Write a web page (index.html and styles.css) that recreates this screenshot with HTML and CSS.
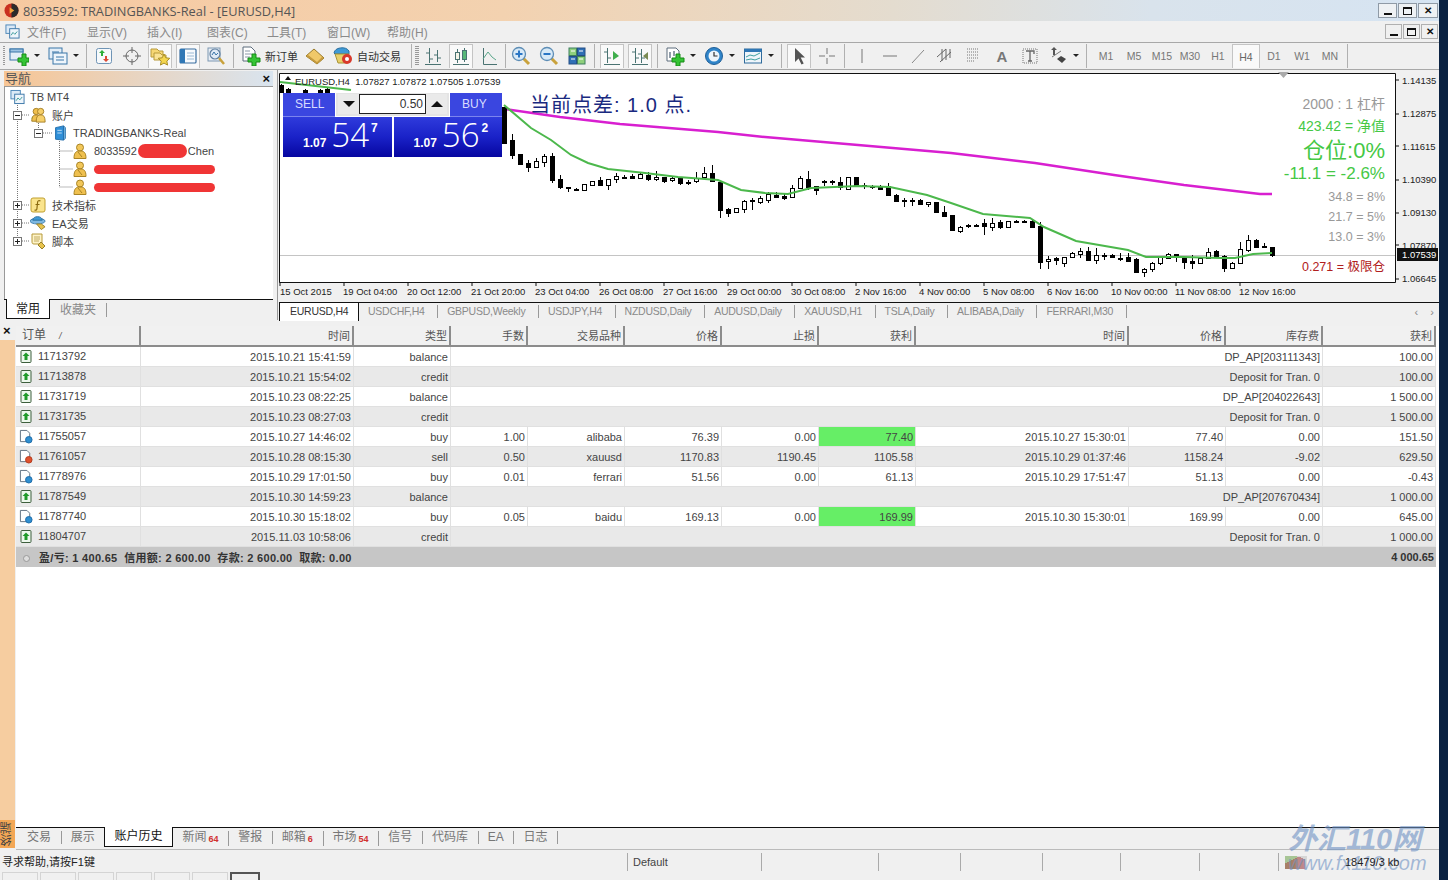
FILE: index.html

```html
<!DOCTYPE html>
<html lang="zh-CN">
<head>
    <meta charset="UTF-8">
    <title>8033592: TRADINGBANKS-Real - [EURUSD,H4]</title>
    <link rel="stylesheet" href="styles.css">
</head>
<body>
    <!-- Icon sprite -->
    <svg class="sprite" xmlns="http://www.w3.org/2000/svg">
        <symbol id="i-app" viewBox="0 0 16 16"><rect x="1" y="1" width="10" height="9" fill="#dbe9f6" stroke="#4a86b8"/><rect x="5" y="5" width="10" height="10" fill="#eef5fb" stroke="#3a76a8"/><path d="M6.500 12l2-3 2 2 2.500-3" fill="none" stroke="#3a9a9a"/></symbol>
        <symbol id="i-newchart" viewBox="0 0 20 20"><rect x="1" y="3" width="13" height="11" fill="#e3eef8" stroke="#3a76a8"/><rect x="1" y="3" width="13" height="3" fill="#9cc3e3" stroke="#3a76a8"/><path d="M13 8v4H9v4h4v4h4v-4h3v-4h-3V8z" fill="#35c435" stroke="#178a17"/></symbol>
        <symbol id="i-profiles" viewBox="0 0 20 20"><rect x="1" y="2" width="13" height="11" fill="#e3eef8" stroke="#3a76a8"/><rect x="5" y="7" width="14" height="11" fill="#eef5fb" stroke="#3a76a8"/><path d="M4 6h7M8 11h8M8 14h8" stroke="#3a76a8"/></symbol>
        <symbol id="i-watch" viewBox="0 0 20 20"><rect x="2.500" y="2.500" width="15" height="15" rx="2" fill="#f6f9fc" stroke="#6f94b5"/><path d="M8 4l3 3H9v3H7V7H5z" fill="#2eae3c"/><path d="M12 16l-3-3h2v-3h2v3h2z" fill="#dc4a35"/></symbol>
        <symbol id="i-cross" viewBox="0 0 20 20"><circle cx="10" cy="10" r="6" fill="none" stroke="#666"/><path d="M10 1v6M10 13v6M1 10h6M13 10h6" stroke="#666"/></symbol>
        <symbol id="i-fav" viewBox="0 0 20 20"><path d="M1 3h6l2 2h4v6H1z" fill="#f6d774" stroke="#b79a3a"/><path d="M4 7h6l2 2h4v5H4z" fill="#fae394" stroke="#b79a3a"/><path d="M14 8l1.800 3.800 4 .5-3 2.800.8 4-3.600-2-3.600 2 .8-4-3-2.800 4-.5z" fill="#f4d64e" stroke="#a98f28"/></symbol>
        <symbol id="i-navp" viewBox="0 0 20 20"><rect x="2" y="3" width="16" height="14" rx="1" fill="#f7fafd" stroke="#3a6ea0" stroke-width="1.200"/><rect x="2" y="3" width="5" height="14" fill="#2f77b5"/><path d="M9 7h7M9 10h7M9 13h7" stroke="#9ab9d4"/></symbol>
        <symbol id="i-tester" viewBox="0 0 20 20"><rect x="2" y="2" width="12" height="13" fill="#e8eef5" stroke="#7c97b2"/><circle cx="9" cy="8" r="5" fill="#dfeaf5" stroke="#5f7f9f" stroke-width="1.200"/><path d="M6 9l2-3 2 3 2-2" fill="none" stroke="#3a76a8"/><path d="M13 12l5 6" stroke="#c9a23c" stroke-width="2.500"/></symbol>
        <symbol id="i-order" viewBox="0 0 20 20"><path d="M2 1h8l4 4v10H2z" fill="#fff" stroke="#5d6d7d"/><path d="M4 5h5M4 8h7M4 11h5" stroke="#8a98a6"/><path d="M11 8v4H7v4h4v4h4v-4h4v-4h-4V8z" fill="#35c435" stroke="#178a17"/></symbol>
        <symbol id="i-diamond" viewBox="0 0 20 20"><path d="M1 10l8-7 10 9-7 6z" fill="#f0c869" stroke="#9a7b2a"/><path d="M1 10l11 8 7-6-2-1-5 5-9-7z" fill="#c49a3f"/></symbol>
        <symbol id="i-auto" viewBox="0 0 20 20"><path d="M1 7a8 6 0 0 1 15-2v3H2z" fill="#3f9ad6" stroke="#2a6f9f"/><path d="M2 8h14l-2 9H5z" fill="#e8d06a" stroke="#a89335"/><circle cx="14" cy="13" r="5" fill="#d8392b"/><circle cx="14" cy="13" r="2" fill="#fff"/></symbol>
        <symbol id="i-bars" viewBox="0 0 20 20"><path d="M6.500 2v15M3 7h3.500M6.500 13H10M14.500 4v12M11 9h3.500M14.500 12H18M2 18.500h16" fill="none" stroke="#4a7372"/></symbol>
        <symbol id="i-candle" viewBox="0 0 20 20"><path d="M6.500 3v14M13.500 2v14M2 18.500h16" stroke="#4a7372"/><rect x="4.500" y="6.500" width="4" height="7" fill="#f4f4e8" stroke="#4a7372"/><rect x="11.500" y="4.500" width="4" height="9" fill="#57b878" stroke="#4a7372"/></symbol>
        <symbol id="i-line" viewBox="0 0 20 20"><path d="M4.500 2v16.500H18" fill="none" stroke="#4a7372"/><path d="M4 13l5-7 4 5 4 3" fill="none" stroke="#5aa68a"/></symbol>
        <symbol id="i-zoomin" viewBox="0 0 20 20"><path d="M12 12l6 6" stroke="#c9a23c" stroke-width="3"/><circle cx="8" cy="8" r="6.500" fill="#d7e9f7" stroke="#5d8db5" stroke-width="1.300"/><path d="M4.500 8h7M8 4.500v7" stroke="#2a76c5" stroke-width="2"/></symbol>
        <symbol id="i-zoomout" viewBox="0 0 20 20"><path d="M12 12l6 6" stroke="#c9a23c" stroke-width="3"/><circle cx="8" cy="8" r="6.500" fill="#d7e9f7" stroke="#5d8db5" stroke-width="1.300"/><path d="M4.500 8h7" stroke="#2a76c5" stroke-width="2"/></symbol>
        <symbol id="i-tile" viewBox="0 0 20 20"><rect x="2" y="2" width="7.500" height="7.500" fill="#8fd07c" stroke="#3d7f5f"/><rect x="10.500" y="2" width="7.500" height="7.500" fill="#2f6fb5" stroke="#254f85"/><rect x="2" y="10.500" width="7.500" height="7.500" fill="#2f6fb5" stroke="#254f85"/><rect x="10.500" y="10.500" width="7.500" height="7.500" fill="#8fd07c" stroke="#3d7f5f"/><path d="M4 5h4M12 5h4M4 13h4M12 13h4" stroke="#fff"/></symbol>
        <symbol id="i-shift" viewBox="0 0 20 20"><path d="M5.500 2v15M2 6h3.500M5.500 12H9M2 18.500h16" fill="none" stroke="#4a7372"/><path d="M11 5l6 5-6 4z" fill="#3fae4c"/></symbol>
        <symbol id="i-scroll" viewBox="0 0 20 20"><path d="M5.500 2v15M2 6h3.500M5.500 12H9M11.500 3v14M8 8h3.500M11.500 12H15M2 18.500h16" fill="none" stroke="#4a7372"/><path d="M18 6l-5 4 5 4z" fill="#7a8a52"/></symbol>
        <symbol id="i-indic" viewBox="0 0 20 20"><path d="M2 2h9l3 3v10H2z" fill="#fff" stroke="#5d6d7d"/><path d="M5 6v6M9 5v5" stroke="#6d7d8d" stroke-width="1.500"/><path d="M11 8v4H7v4h4v4h4v-4h4v-4h-4V8z" fill="#35c435" stroke="#178a17"/></symbol>
        <symbol id="i-clock" viewBox="0 0 20 20"><circle cx="10" cy="10" r="8.500" fill="#2f84c9" stroke="#1f5f98"/><circle cx="10" cy="10" r="5.500" fill="#eef5fb"/><path d="M10 6v4h3.500" fill="none" stroke="#333" stroke-width="1.200"/></symbol>
        <symbol id="i-tpl" viewBox="0 0 20 20"><rect x="1.500" y="3" width="17" height="14" fill="#eef5fb" stroke="#2f6b9b"/><rect x="1.500" y="3" width="17" height="3" fill="#2f77b5"/><path d="M3 11l4-2 4 1 6-3M3 14l5-1 4 1 5-2" fill="none" stroke="#3fa0a0"/></symbol>
        <symbol id="i-cursor" viewBox="0 0 20 20"><path d="M6 2v14l3.500-3.500 3 6 2.200-1-3-6H16z" fill="#555"/></symbol>
        <symbol id="i-plus" viewBox="0 0 20 20"><path d="M10 2v6M10 12v6M2 10h6M12 10h6" stroke="#777"/></symbol>
        <symbol id="i-vline" viewBox="0 0 20 20"><path d="M10 3v14" stroke="#777"/></symbol>
        <symbol id="i-hline" viewBox="0 0 20 20"><path d="M3 10h14" stroke="#777"/></symbol>
        <symbol id="i-trend" viewBox="0 0 20 20"><path d="M4 17L16 4" stroke="#888"/></symbol>
        <symbol id="i-channel" viewBox="0 0 20 20"><path d="M1 11l9-8M4 16l11-10M6 3v12M10 3v11M14 3v9" fill="none" stroke="#666"/></symbol>
        <symbol id="i-fibo" viewBox="0 0 20 20"><path d="M3 3h11M3 6h11M3 9h11M3 12h11M3 15h8" stroke="#777" stroke-dasharray="1 1"/></symbol>
        <symbol id="i-t" viewBox="0 0 20 20"><rect x="3" y="3" width="14" height="14" fill="none" stroke="#777" stroke-dasharray="1 1"/><path d="M6 5h8v3M10 5v10M8 15h4" fill="none" stroke="#666" stroke-width="1.300"/></symbol>
        <symbol id="i-arrows" viewBox="0 0 20 20"><path d="M3 4l3-3 3 3H7v5H5V4z" fill="#555"/><path d="M4 11l9-6" stroke="#777"/><path d="M9 13l4-3 5 3-4 4z" fill="#444"/></symbol>
        <symbol id="i-group" viewBox="0 0 18 18"><circle cx="5" cy="13" r="3" fill="#3fc43f"/><circle cx="7" cy="5" r="3.500" fill="#f0bf4c" stroke="#a07a22"/><path d="M2 16c0-6 2-7 5-7s5 1 5 7z" fill="#efc04f" stroke="#a07a22"/><circle cx="12" cy="5" r="3.500" fill="#f6cf68" stroke="#a07a22"/><path d="M7 17c0-7 2-8 5-8s5 1 5 8z" fill="#f6cf68" stroke="#a07a22"/></symbol>
        <symbol id="i-server" viewBox="0 0 14 18"><path d="M2 3l9-2v16l-9-1z" fill="#2f8fd8" stroke="#1d6aa8"/><path d="M11 1l2 2v12l-2 2z" fill="#7fc0ea" stroke="#1d6aa8"/><path d="M4 6h5M4 9h5" stroke="#cfe6f7"/></symbol>
        <symbol id="i-user" viewBox="0 0 14 16"><circle cx="7" cy="4.500" r="3.500" fill="#f2c75a" stroke="#a98425"/><path d="M1 15.500c0-6 2-7.500 6-7.500s6 1.500 6 7.500z" fill="#efc04f" stroke="#a98425"/><path d="M5 9l4 5" stroke="#a98425"/></symbol>
        <symbol id="i-func" viewBox="0 0 16 16"><rect x="1" y="1" width="14" height="14" rx="2" fill="#fae48d" stroke="#c0a030"/><path d="M10.500 4c-2-1-3 0-3 2l-.5 5c0 2-1 2.500-2.500 2M5.500 7.500h4" fill="none" stroke="#8a6a10" stroke-width="1.200"/></symbol>
        <symbol id="i-ea" viewBox="0 0 17 16"><ellipse cx="8" cy="6" rx="8" ry="3" fill="#7fb8e0" stroke="#3d7fb0"/><path d="M3 5c0-5 10-5 10 0z" fill="#3f9ad6" stroke="#2a6f9f"/><path d="M7 9l5 6 4-3-4-3z" fill="#e8c34d" stroke="#98812c"/></symbol>
        <symbol id="i-script" viewBox="0 0 16 16"><path d="M2 1h10v10H4c-2 0-2-1-2-3z" fill="#fdf3c8" stroke="#b79a3a"/><path d="M4 4h6M4 6h6M4 8h5" stroke="#c2ab62"/><path d="M8 12l3-3 4 4-3 3z" fill="#e8c34d" stroke="#98812c"/></symbol>
        <symbol id="i-deposit" viewBox="0 0 13 15"><rect x="1.500" y="1.500" width="10" height="12" rx="1" fill="#eef8ee" stroke="#3d5f3d"/><path d="M6.500 3.500l3.500 3.500H8v4H5V7H3z" fill="#1f9a2a"/></symbol>
        <symbol id="i-docbuy" viewBox="0 0 15 15"><path d="M1.500 1h7l3 3v9h-10z" fill="#fff" stroke="#5d6d7d"/><circle cx="10.500" cy="11" r="3.500" fill="#2f8fd0" stroke="#1d6aa8"/></symbol>
        <symbol id="i-docsell" viewBox="0 0 15 15"><path d="M1.500 1h7l3 3v9h-10z" fill="#fff" stroke="#5d6d7d"/><circle cx="10.500" cy="11" r="3.500" fill="#e0502c" stroke="#b23a1c"/></symbol>
    </svg>

    <div class="app">
        <!-- Title bar -->
        <div class="titlebar">
            <svg class="title-logo" viewBox="0 0 16 16"><circle cx="8" cy="8" r="7.500" fill="#c9301f"/><path d="M8 .5a7.500 7.500 0 0 1 0 15z" fill="#2b2b2b"/><path d="M6 4.500l5 3.500-5 3.500z" fill="#f3a23a"/></svg>
            <span class="title-text">8033592: TRADINGBANKS-Real - [EURUSD,H4]</span>
            <div class="win-btns">
                <span class="win-btn"><i class="glyph-min"></i></span>
                <span class="win-btn"><i class="glyph-max"></i></span>
                <span class="win-btn close">✕</span>
            </div>
        </div>

        <!-- Menu bar -->
        <div class="menubar">
            <svg class="menu-icon"><use href="#i-app"/></svg>
            <span class="menu-item">文件(F)</span>
            <span class="menu-item">显示(V)</span>
            <span class="menu-item">插入(I)</span>
            <span class="menu-item">图表(C)</span>
            <span class="menu-item">工具(T)</span>
            <span class="menu-item">窗口(W)</span>
            <span class="menu-item">帮助(H)</span>
            <div class="win-btns small">
                <span class="win-btn"><i class="glyph-min"></i></span>
                <span class="win-btn"><i class="glyph-max"></i></span>
                <span class="win-btn close">✕</span>
            </div>
        </div>

        <!-- Toolbar -->
        <div class="toolbar">
            <span class="grip"></span>
            <span class="tool"><svg><use href="#i-newchart"/></svg></span><span class="caret"></span>
            <span class="tool"><svg><use href="#i-profiles"/></svg></span><span class="caret"></span>
            <span class="sep"></span>
            <span class="tool"><svg><use href="#i-watch"/></svg></span>
            <span class="tool"><svg><use href="#i-cross"/></svg></span>
            <span class="tool on"><svg><use href="#i-fav"/></svg></span>
            <span class="tool on"><svg><use href="#i-navp"/></svg></span>
            <span class="tool"><svg><use href="#i-tester"/></svg></span>
            <span class="sep"></span>
            <span class="tool"><svg><use href="#i-order"/></svg></span>
            <span class="tool-label order">新订单</span>
            <span class="tool"><svg><use href="#i-diamond"/></svg></span>
            <span class="tool"><svg><use href="#i-auto"/></svg></span>
            <span class="tool-label auto">自动交易</span>
            <span class="sep"></span>
            <span class="grip wide"></span>
            <span class="tool"><svg><use href="#i-bars"/></svg></span>
            <span class="tool on"><svg><use href="#i-candle"/></svg></span>
            <span class="tool"><svg><use href="#i-line"/></svg></span>
            <span class="sep tight"></span>
            <span class="tool"><svg><use href="#i-zoomin"/></svg></span>
            <span class="tool"><svg><use href="#i-zoomout"/></svg></span>
            <span class="tool"><svg><use href="#i-tile"/></svg></span>
            <span class="sep"></span>
            <span class="tool on"><svg><use href="#i-shift"/></svg></span>
            <span class="tool on"><svg><use href="#i-scroll"/></svg></span>
            <span class="sep"></span>
            <span class="tool"><svg><use href="#i-indic"/></svg></span><span class="caret"></span>
            <span class="tool"><svg><use href="#i-clock"/></svg></span><span class="caret"></span>
            <span class="tool"><svg><use href="#i-tpl"/></svg></span><span class="caret"></span>
            <span class="sep"></span>
            <span class="tool on"><svg><use href="#i-cursor"/></svg></span>
            <span class="tool"><svg><use href="#i-plus"/></svg></span>
            <span class="sep"></span>
            <span class="tool"><svg><use href="#i-vline"/></svg></span>
            <span class="tool"><svg><use href="#i-hline"/></svg></span>
            <span class="tool"><svg><use href="#i-trend"/></svg></span>
            <span class="tool"><svg><use href="#i-channel"/></svg></span>
            <span class="tool"><svg><use href="#i-fibo"/></svg></span>
            <span class="tool letter">A</span>
            <span class="tool"><svg><use href="#i-t"/></svg></span>
            <span class="tool"><svg><use href="#i-arrows"/></svg></span><span class="caret"></span>
            <span class="sep"></span>
            <span class="tf first">M1</span>
            <span class="tf">M5</span>
            <span class="tf">M15</span>
            <span class="tf">M30</span>
            <span class="tf">H1</span>
            <span class="tf on">H4</span>
            <span class="tf">D1</span>
            <span class="tf">W1</span>
            <span class="tf">MN</span>
            <span class="sep"></span>
        </div>

        <div class="workspace">
            <!-- Navigator -->
            <div class="navigator">
                <div class="nav-head"><span>导航</span><b>×</b></div>
                <div class="tree">
                    <svg class="tree-lines" viewBox="0 0 268 210">
                        <path d="M12.500 16v138M33.500 36v10M54.500 54v46M17 28h8M38 46h9M54.500 64h13M54.500 82h13M54.500 100h13M17 118h8M17 136h8M17 154h8" fill="none" stroke="#777" stroke-dasharray="1 1"/>
                    </svg>
                    <div class="node root"><svg class="ico"><use href="#i-app"/></svg>TB MT4</div>
                    <div class="node lv1"><span class="expander minus"></span><svg class="ico"><use href="#i-group"/></svg>账户</div>
                    <div class="node lv2"><span class="expander minus"></span><svg class="ico"><use href="#i-server"/></svg>TRADINGBANKS-Real</div>
                    <div class="node lv3"><svg class="ico"><use href="#i-user"/></svg>8033592<span class="blot first"></span>Chen</div>
                    <div class="node lv3"><svg class="ico"><use href="#i-user"/></svg><span class="blot"></span></div>
                    <div class="node lv3"><svg class="ico"><use href="#i-user"/></svg><span class="blot"></span></div>
                    <div class="node lv1"><span class="expander"></span><svg class="ico"><use href="#i-func"/></svg>技术指标</div>
                    <div class="node lv1"><span class="expander"></span><svg class="ico"><use href="#i-ea"/></svg>EA交易</div>
                    <div class="node lv1"><span class="expander"></span><svg class="ico"><use href="#i-script"/></svg>脚本</div>
                </div>
                <div class="nav-tabs">
                    <span class="nav-tab active">常用</span>
                    <span class="nav-tab">收藏夹</span>
                </div>
            </div>

            <!-- Chart window -->
            <div class="chart-pane">
                <div class="chart-wrap">
                    <svg class="chart" viewBox="278 72 1161 230">
                        <rect x="280" y="74" width="1115" height="208" fill="#fff"/>
                        <path d="M279.500 73.500H1395.500V282.500H279.500Z" fill="none" stroke="#111"/>
                        <path d="M280 255.500H1395" stroke="#c4c4c4"/>
                        <path d="M1278 72h11l-5.500 6z" fill="#aaa"/>
                        <polyline class="ma-slow" points="505,109 560,117 620,124 718,132 765,137 858,145 951,153 1035,163 1114,175 1184,185 1260,194 1272,194"/>
                        <g id="candles"></g>
                        <polyline class="ma-fast" points="280,82 351,90"/>
                        <polyline class="ma-fast" points="504,105 531,128 551,140 571,155 588,163 608,169 645,173 678,177 718,180 741,190 765,193 788,194 811,188 858,186 890,187 927,195 951,203 983,214 1030,218 1044,227 1076,241 1128,250 1146,257 1184,257 1221,258 1235,258 1253,254 1272,253"/>
                        <path d="M285 80l3-4 3 4z" fill="#111"/>
                        <text class="lbl" x="295" y="85">EURUSD,H4  1.07827 1.07872 1.07505 1.07539</text>
                        <text class="spread" x="530" y="112">当前点差: 1.0 点.</text>
                        <text class="info grey big" x="1385" y="109">2000 : 1 杠杆</text>
                        <text class="info green big" x="1385" y="131">423.42 = 净值</text>
                        <text class="info green huge" x="1385" y="158">仓位:0%</text>
                        <text class="info green large" x="1385" y="179">-11.1 = -2.6%</text>
                        <text class="info grey" x="1385" y="201">34.8 = 8%</text>
                        <text class="info grey" x="1385" y="221">21.7 = 5%</text>
                        <text class="info grey" x="1385" y="241">13.0 = 3%</text>
                        <text class="info red" x="1385" y="271">0.271 = 极限仓</text>
                        <!-- Price axis -->
                        <path d="M1395 80h4M1395 114h4M1395 146h4M1395 180h4M1395 213h4M1395 245h4M1395 279h4" stroke="#111"/>
                        <text class="lbl" x="1402" y="84">1.14135</text>
                        <text class="lbl" x="1402" y="117">1.12875</text>
                        <text class="lbl" x="1402" y="150">1.11615</text>
                        <text class="lbl" x="1402" y="183">1.10390</text>
                        <text class="lbl" x="1402" y="216">1.09130</text>
                        <text class="lbl" x="1402" y="249">1.07870</text>
                        <text class="lbl" x="1402" y="282">1.06645</text>
                        <rect x="1397" y="248" width="41" height="13" fill="#111"/>
                        <text class="lbl tag" x="1402" y="258">1.07539</text>
                        <!-- Time axis -->
                        <path d="M280 282v4M344 282v4M408 282v4M472 282v4M536 282v4M600 282v4M664 282v4M728 282v4M792 282v4M856 282v4M920 282v4M984 282v4M1048 282v4M1112 282v4M1176 282v4M1240 282v4" stroke="#111"/>
                        <text class="lbl" x="280" y="295">15 Oct 2015</text>
                        <text class="lbl" x="343" y="295">19 Oct 04:00</text>
                        <text class="lbl" x="407" y="295">20 Oct 12:00</text>
                        <text class="lbl" x="471" y="295">21 Oct 20:00</text>
                        <text class="lbl" x="535" y="295">23 Oct 04:00</text>
                        <text class="lbl" x="599" y="295">26 Oct 08:00</text>
                        <text class="lbl" x="663" y="295">27 Oct 16:00</text>
                        <text class="lbl" x="727" y="295">29 Oct 00:00</text>
                        <text class="lbl" x="791" y="295">30 Oct 08:00</text>
                        <text class="lbl" x="855" y="295">2 Nov 16:00</text>
                        <text class="lbl" x="919" y="295">4 Nov 00:00</text>
                        <text class="lbl" x="983" y="295">5 Nov 08:00</text>
                        <text class="lbl" x="1047" y="295">6 Nov 16:00</text>
                        <text class="lbl" x="1111" y="295">10 Nov 00:00</text>
                        <text class="lbl" x="1175" y="295">11 Nov 08:00</text>
                        <text class="lbl" x="1239" y="295">12 Nov 16:00</text>
                    </svg>

                    <!-- One click trading panel -->
                    <div class="trade-panel">
                        <div class="trade-top">
                            <span class="trade-btn">SELL</span>
                            <div class="lot-box">
                                <span class="spin"><i class="tri-down"></i></span>
                                <span class="lot-input">0.50</span>
                                <span class="spin"><i class="tri-up"></i></span>
                            </div>
                            <span class="trade-btn">BUY</span>
                        </div>
                        <div class="trade-prices">
                            <div class="quote"><span class="q-small">1.07</span><span class="q-big">54</span><span class="q-sup">7</span></div>
                            <div class="quote"><span class="q-small">1.07</span><span class="q-big">56</span><span class="q-sup">2</span></div>
                        </div>
                    </div>
                </div>
                <div class="chart-tabs">
                    <span class="ctab active">EURUSD,H4</span>
                    <span class="ctab">USDCHF,H4</span>
                    <span class="ctab">GBPUSD,Weekly</span>
                    <span class="ctab">USDJPY,H4</span>
                    <span class="ctab">NZDUSD,Daily</span>
                    <span class="ctab">AUDUSD,Daily</span>
                    <span class="ctab">XAUUSD,H1</span>
                    <span class="ctab">TSLA,Daily</span>
                    <span class="ctab">ALIBABA,Daily</span>
                    <span class="ctab">FERRARI,M30</span>
                    <span class="ctab-nav">‹&nbsp;&nbsp;&nbsp;&nbsp;›</span>
                </div>
            </div>
        </div>

        <!-- Terminal -->
        <div class="terminal">
            <div class="term-side">
                <b>×</b>
                <span class="term-strip"></span>
                <span class="term-name">终端</span>
            </div>
            <div class="term-main">
                <div class="term-table">
                    <table class="history">
                        <colgroup>
                            <col class="c-order"><col class="c-time"><col class="c-std"><col class="c-lots"><col class="c-std"><col class="c-std"><col class="c-std"><col class="c-std"><col class="c-time"><col class="c-std"><col class="c-std"><col class="c-last">
                        </colgroup>
                        <thead>
                            <tr>
                                <th class="left">订单<em>/</em></th><th>时间</th><th>类型</th><th>手数</th><th>交易品种</th><th>价格</th><th>止损</th><th>获利</th><th>时间</th><th>价格</th><th>库存费</th><th>获利</th>
                            </tr>
                        </thead>
                        <tbody>
                            <tr><td class="left"><svg class="row-ico"><use href="#i-deposit"/></svg>11713792</td><td>2015.10.21 15:41:59</td><td>balance</td><td colspan="8">DP_AP[203111343]</td><td>100.00</td></tr>
                            <tr><td class="left"><svg class="row-ico"><use href="#i-deposit"/></svg>11713878</td><td>2015.10.21 15:54:02</td><td>credit</td><td colspan="8">Deposit for Tran. 0</td><td>100.00</td></tr>
                            <tr><td class="left"><svg class="row-ico"><use href="#i-deposit"/></svg>11731719</td><td>2015.10.23 08:22:25</td><td>balance</td><td colspan="8">DP_AP[204022643]</td><td>1 500.00</td></tr>
                            <tr><td class="left"><svg class="row-ico"><use href="#i-deposit"/></svg>11731735</td><td>2015.10.23 08:27:03</td><td>credit</td><td colspan="8">Deposit for Tran. 0</td><td>1 500.00</td></tr>
                            <tr><td class="left"><svg class="row-ico"><use href="#i-docbuy"/></svg>11755057</td><td>2015.10.27 14:46:02</td><td>buy</td><td>1.00</td><td>alibaba</td><td>76.39</td><td>0.00</td><td class="hit">77.40</td><td>2015.10.27 15:30:01</td><td>77.40</td><td>0.00</td><td>151.50</td></tr>
                            <tr><td class="left"><svg class="row-ico"><use href="#i-docsell"/></svg>11761057</td><td>2015.10.28 08:15:30</td><td>sell</td><td>0.50</td><td>xauusd</td><td>1170.83</td><td>1190.45</td><td>1105.58</td><td>2015.10.29 01:37:46</td><td>1158.24</td><td>-9.02</td><td>629.50</td></tr>
                            <tr><td class="left"><svg class="row-ico"><use href="#i-docbuy"/></svg>11778976</td><td>2015.10.29 17:01:50</td><td>buy</td><td>0.01</td><td>ferrari</td><td>51.56</td><td>0.00</td><td>61.13</td><td>2015.10.29 17:51:47</td><td>51.13</td><td>0.00</td><td>-0.43</td></tr>
                            <tr><td class="left"><svg class="row-ico"><use href="#i-deposit"/></svg>11787549</td><td>2015.10.30 14:59:23</td><td>balance</td><td colspan="8">DP_AP[207670434]</td><td>1 000.00</td></tr>
                            <tr><td class="left"><svg class="row-ico"><use href="#i-docbuy"/></svg>11787740</td><td>2015.10.30 15:18:02</td><td>buy</td><td>0.05</td><td>baidu</td><td>169.13</td><td>0.00</td><td class="hit">169.99</td><td>2015.10.30 15:30:01</td><td>169.99</td><td>0.00</td><td>645.00</td></tr>
                            <tr><td class="left"><svg class="row-ico"><use href="#i-deposit"/></svg>11804707</td><td>2015.11.03 10:58:06</td><td>credit</td><td colspan="8">Deposit for Tran. 0</td><td>1 000.00</td></tr>
                            <tr class="total"><td class="left" colspan="11"><span class="dot"></span>盈/亏: 1 400.65&nbsp;&nbsp;信用额: 2 600.00&nbsp;&nbsp;存款: 2 600.00&nbsp;&nbsp;取款: 0.00</td><td>4 000.65</td></tr>
                        </tbody>
                    </table>
                </div>
                <div class="term-tabs">
                    <span class="ttab">交易</span>
                    <span class="ttab">展示</span>
                    <span class="ttab active">账户历史</span>
                    <span class="ttab">新闻<sup>64</sup></span>
                    <span class="ttab">警报</span>
                    <span class="ttab">邮箱<sup>6</sup></span>
                    <span class="ttab">市场<sup>54</sup></span>
                    <span class="ttab">信号</span>
                    <span class="ttab">代码库</span>
                    <span class="ttab">EA</span>
                    <span class="ttab">日志</span>
                </div>
            </div>
        </div>

        <!-- Status bar -->
        <div class="statusbar">
            <span class="st help">寻求帮助,请按F1键</span>
            <span class="st profile">Default</span>
            <span class="st w117"></span>
            <span class="st w82"></span>
            <span class="st w82"></span>
            <span class="st w78"></span>
            <span class="st w79"></span>
            <span class="st w79"></span>
            <span class="st conn">
                <svg class="conn-bars" viewBox="0 0 22 14"><path d="M1 14V1M3 14V1M5 14V1M7 14V1M9 14V1M11 14V1" stroke="#5f9a3a"/><path d="M13 14V1M15 14V1M17 14V1M19 14V1M21 14V1" stroke="#bbb"/><path d="M1 14V8M3 14V7M5 14V6M7 14V5M9 14V4M11 14V3M13 14V2M15 14V2M17 14V3M19 14V4" stroke="#a83a3a"/></svg>
                <span class="conn-text">18479/3 kb</span>
            </span>
            <div class="watermark"><b>外汇110网</b><i>www.fx110.com</i></div>
        </div>
        <div class="taskstrip">
            <span class="task"></span><span class="task"></span><span class="task"></span><span class="task"></span><span class="task"></span><span class="task"></span><span class="task on"></span>
        </div>
    </div>

    <script src="chart.js"></script>
</body>
</html>
```

FILE: styles.css

```css
/* General reset */
* {
    box-sizing: border-box;
    margin: 0;
    padding: 0;
}

body {
    width: 1448px;
    height: 880px;
    overflow: hidden;
    background-color: #0a2242;
    font-family: "Liberation Sans", "Noto Sans CJK SC", sans-serif;
    font-size: 11px;
    color: #444;
}

.sprite {
    position: absolute;
    width: 0;
    height: 0;
}

.app {
    display: flex;
    flex-direction: column;
    width: 1439px;
    height: 880px;
    background-color: #f0f0f0;
}

/* Title bar */
.titlebar {
    display: flex;
    align-items: center;
    flex: 0 0 21px;
    padding-left: 4px;
    background: linear-gradient(to right, #f7c9a0 0%, #f3d2b0 35%, #e4dccf 62%, #d9e3ec 80%, #d6e4f2 100%);
}

.title-logo {
    width: 15px;
    height: 15px;
    margin-right: 4px;
}

.title-text {
    font-family: "Open Sans", "Liberation Sans", sans-serif;
    font-size: 12.800px;
    color: #555;
}

.win-btns {
    display: flex;
    gap: 1px;
    margin-left: auto;
    padding-right: 1px;
}

.win-btn {
    display: flex;
    align-items: center;
    justify-content: center;
    width: 19px;
    height: 15px;
    background-color: #eef1f4;
    border: 1px solid #8f9aa6;
    font-size: 10px;
    font-weight: bold;
    color: #111;
}

.win-btn.close {
    width: 20px;
}

.win-btns.small .win-btn {
    width: 17px;
    background-color: #f0f0f0;
    border-color: #b0b0b0;
}

.glyph-min {
    width: 8px;
    height: 2px;
    margin-top: 7px;
    background-color: #111;
}

.glyph-max {
    width: 9px;
    height: 8px;
    border: 1px solid #111;
    border-top-width: 2px;
}

/* Menu bar */
.menubar {
    display: flex;
    align-items: center;
    flex: 0 0 21px;
    padding-left: 5px;
}

.menu-icon {
    width: 15px;
    height: 15px;
    margin-right: 7px;
}

.menu-item {
    width: 60px;
    font-size: 12px;
    color: #8a8a8a;
}

/* Toolbar */
.toolbar {
    display: flex;
    align-items: center;
    flex: 0 0 28px;
    padding-left: 3px;
    border-top: 1px solid #a8a8a8;
    border-bottom: 1px solid #a8a8a8;
}

.grip {
    width: 2px;
    height: 20px;
    background: repeating-linear-gradient(to bottom, #999 0 1px, transparent 1px 2px);
}

.grip.wide {
    width: 4px;
}

.tool {
    display: flex;
    align-items: center;
    justify-content: center;
    width: 28px;
    height: 24px;
}

.tool svg {
    width: 20px;
    height: 20px;
}

.tool.on,
.tf.on {
    background-color: #f9f9f9;
    border: 1px solid #c4c4c4;
    border-width: 1px 1px 0;
    background-clip: padding-box;
}

.tool.on {
    border-left: 2px solid #f0f0f0;
    border-right: 2px solid #f0f0f0;
    box-shadow: inset 1px 0 #c4c4c4, inset -1px 0 #c4c4c4, inset 0 1px #c4c4c4;
    border-top: 0;
}

.tool.letter {
    font-size: 15px;
    font-weight: bold;
    color: #777;
}

.tool-label {
    font-size: 11px;
    color: #333;
}

.tool-label.order {
    width: 36px;
}

.tool-label.auto {
    width: 51px;
}

.caret {
    position: relative;
    width: 11px;
    height: 24px;
}

.caret::after {
    content: "";
    position: absolute;
    top: 10px;
    left: 1px;
    border-top: 3px solid #222;
    border-left: 3px solid transparent;
    border-right: 3px solid transparent;
}

.sep {
    width: 1px;
    height: 24px;
    margin: 0 3px;
    background-color: #b0b0b0;
}

.sep.tight {
    margin: 0 1px 0 2px;
}

.tf {
    width: 28px;
    height: 24px;
    line-height: 24px;
    text-align: center;
    font-size: 10.500px;
    color: #777;
}

.tf.first {
    margin-left: 2px;
}

.tf.on {
    border-color: #c4c4c4;
    color: #666;
}

/* Upper area: navigator + chart */
.workspace {
    display: flex;
    flex: 0 0 252px;
    padding-bottom: 2px;
}

.navigator {
    display: flex;
    flex-direction: column;
    flex: 0 0 278px;
    padding: 1px 4px 0 0;
    border-left: 4px solid #f0f0f0;
    border-right: 1px solid #999;
}

.nav-head {
    display: flex;
    align-items: center;
    justify-content: space-between;
    flex: none;
    height: 16px;
    line-height: 16px;
    overflow: hidden;
    padding: 0 3px 0 1px;
    background: linear-gradient(to right, #f7c594, #d9e4ef);
    border-bottom: 1px solid #999;
    font-size: 13px;
    color: #555;
}

.nav-head b {
    font-size: 13px;
    color: #111;
}

.tree {
    position: relative;
    flex: 1;
    background-color: #fff;
    border-left: 1px solid #999;
    padding-top: 1px;
}

.tree-lines {
    position: absolute;
    top: 0;
    left: 0;
    width: 268px;
    height: 210px;
}

.node {
    position: relative;
    display: flex;
    align-items: center;
    height: 18px;
    font-size: 11px;
    color: #444;
}

.node.root {
    padding-left: 5px;
}

.node.lv1 {
    padding-left: 8px;
}

.node.lv2 {
    padding-left: 29px;
}

.node.lv3 {
    padding-left: 68px;
}

.ico {
    flex: none;
    width: 16px;
    height: 16px;
    margin-right: 6px;
}

.root .ico {
    width: 15px;
    margin-right: 5px;
}

.lv2 .ico {
    width: 14px;
}

.lv3 .ico {
    width: 14px;
    margin-right: 7px;
}

.expander {
    position: relative;
    flex: none;
    width: 9px;
    height: 9px;
    margin-right: 8px;
    background-color: #fff;
    border: 1px solid #777;
    background-image: linear-gradient(#222, #222), linear-gradient(#222, #222);
    background-size: 5px 1px, 1px 5px;
    background-position: center, center;
    background-repeat: no-repeat;
}

.expander.minus {
    background-size: 5px 1px, 0 0;
}

.lv2 .expander {
    margin-right: 10px;
}

.blot {
    width: 121px;
    height: 9px;
    margin-top: 1px;
    background-color: #f03535;
    border-radius: 5px;
}

.blot.first {
    width: 49px;
    height: 14px;
    margin: 0 1px 0 1px;
    border-radius: 7px;
}

.nav-tabs {
    display: flex;
    flex: 0 0 21px;
    min-height: 0;
    padding-left: 2px;
    border-top: 1px solid #111;
}

.nav-tab {
    height: 14px;
    margin-top: 3px;
    padding: 0 10px;
    line-height: 14px;
    font-size: 12px;
    color: #888;
    border-right: 1px solid #999;
}

.nav-tab.active {
    height: 20px;
    margin-top: -1px;
    padding: 0 9px;
    line-height: 20px;
    background-color: #fff;
    border: 1px solid #111;
    border-width: 0 1px 1px 1px;
    color: #222;
}

/* Chart window */
.chart-pane {
    flex: 1;
    display: flex;
    flex-direction: column;
    min-width: 0;
}

.chart-wrap {
    position: relative;
    height: 230px;
    margin-top: 2px;
}

.chart {
    display: block;
    width: 1161px;
    height: 230px;
}

.lbl {
    font-size: 9.500px;
    fill: #222;
    white-space: pre;
}

.lbl.tag {
    fill: #fff;
}

.ma-slow {
    fill: none;
    stroke: #d81fd0;
    stroke-width: 2.500;
}

.ma-fast {
    fill: none;
    stroke: #4cb84c;
    stroke-width: 2;
}

.spread {
    font-size: 20px;
    fill: #1a2a80;
    letter-spacing: 1px;
}

.info {
    font-size: 12.500px;
    text-anchor: end;
}

.info.big {
    font-size: 14px;
}

.info.large {
    font-size: 17px;
}

.info.huge {
    font-size: 22px;
}

.info.grey {
    fill: #999;
}

.info.green {
    fill: #45c845;
}

.info.red {
    fill: #b02020;
}

/* One click trading panel */
.trade-panel {
    position: absolute;
    top: 21px;
    left: 5px;
    width: 219px;
    height: 64px;
}

.trade-top {
    display: flex;
    height: 24px;
    color: #fff;
}

.trade-btn {
    width: 52px;
    height: 24px;
    line-height: 23px;
    padding-left: 12px;
    background-color: #3a46e0;
    border-bottom: 1px solid #7b84ee;
    font-size: 12px;
    color: #d8dcff;
}

.lot-box {
    display: flex;
    width: 115px;
    height: 24px;
    padding: 1px 2px 2px;
    background-color: #e4e4e4;
    border: 1px solid #fff;
    border-top: 0;
}

.spin {
    display: flex;
    align-items: center;
    justify-content: center;
    width: 21px;
    background-color: #eaeaea;
}

.tri-down {
    border-top: 6px solid #111;
    border-left: 6px solid transparent;
    border-right: 6px solid transparent;
}

.tri-up {
    border-bottom: 6px solid #111;
    border-left: 6px solid transparent;
    border-right: 6px solid transparent;
}

.lot-input {
    flex: 1;
    padding-right: 2px;
    background-color: #fff;
    border: 1px solid #222;
    line-height: 19px;
    text-align: right;
    font-size: 12px;
    color: #333;
}

.trade-prices {
    display: flex;
    gap: 2px;
    height: 40px;
}

.quote {
    position: relative;
    display: flex;
    align-items: baseline;
    flex: 1;
    padding-left: 20px;
    background: linear-gradient(to bottom, #2f3bdc 0%, #1a22c8 50%, #0606a0 100%);
    color: #fff;
}

.q-small {
    margin-right: 5px;
    font-size: 12px;
    font-weight: bold;
}

.q-big {
    font-family: "Open Sans", "Liberation Sans", sans-serif;
    font-size: 33px;
    font-weight: 300;
    line-height: 36px;
}

.q-sup {
    position: absolute;
    top: 4px;
    left: 88px;
    font-size: 12px;
    font-weight: bold;
}

/* Chart tabs */
.chart-tabs {
    display: flex;
    align-items: center;
    height: 18px;
    margin-left: 1px;
    border-top: 1px solid #111;
}

.ctab {
    padding: 0 12.500px 0 9px;
    border-right: 1px solid #999;
    line-height: 13px;
    font-size: 10.500px;
    letter-spacing: -0.250px;
    color: #8a8a8a;
}

.ctab.active {
    width: 80px;
    height: 18px;
    margin-right: 0;
    padding: 0 0 0 10px;
    line-height: 17px;
    background-color: #fff;
    border-right: 1px solid #111;
    border-left: 1px solid #111;
    color: #333;
}

.ctab-nav {
    margin-left: auto;
    padding-right: 5px;
    color: #888;
}

/* Terminal */
.terminal {
    display: flex;
    flex: 0 0 528px;
    min-height: 0;
}

.term-side {
    display: flex;
    flex-direction: column;
    flex: 0 0 16px;
    border-right: 1px solid #f0f0f0;
}

.term-side b {
    height: 18px;
    padding-left: 3px;
    font-size: 13px;
    line-height: 18px;
    color: #111;
}

.term-strip {
    flex: 1;
    background-color: #f6cda0;
}

.term-name {
    width: 15px;
    height: 28px;
    margin-bottom: 2px;
    writing-mode: vertical-rl;
    transform: rotate(180deg);
    background-color: #f3a755;
    text-align: center;
    line-height: 15px;
    font-size: 12px;
    color: #444;
}

.term-main {
    display: flex;
    flex-direction: column;
    flex: 1;
    min-height: 0;
}

.term-table {
    flex: 1;
    min-height: 0;
    padding: 4px 3px 0 0;
    background: linear-gradient(to bottom, #f0f0f0 0 4px, #fff 4px);
}

.history {
    width: 1420px;
    table-layout: fixed;
    border-collapse: separate;
    border-spacing: 0;
}

.c-order { width: 125px; }
.c-time { width: 213px; }
.c-std { width: 97px; }
.c-lots { width: 77px; }
.c-last { width: 113px; }

.history th {
    height: 21px;
    padding: 0 2px;
    background-color: #f1f1f1;
    border-right: 2px solid #8c8c8c;
    border-bottom: 2px solid #8c8c8c;
    text-align: right;
    font-weight: normal;
    font-size: 11px;
    line-height: 14px;
    color: #555;
}

.history th.left {
    padding-left: 6px;
    font-size: 12px;
}

.history th em {
    margin-left: 13px;
    font-size: 9px;
}

.history td {
    height: 20px;
    padding: 0 2px 0 3px;
    background-color: #fff;
    border-right: 1px solid #e0e0e0;
    border-bottom: 1px solid #e0e0e0;
    text-align: right;
    white-space: nowrap;
}

.history tbody tr:nth-child(even) td {
    background-color: #e9e9e9;
}

.history th.left,
.history td.left {
    text-align: left;
}

.history td.hit {
    background-color: #66ee66;
}

.row-ico {
    width: 14px;
    height: 15px;
    margin-right: 5px;
    vertical-align: -4px;
}

.history tr.total td {
    background-color: #c6c6c6;
    border-right: 0;
    border-bottom: 0;
    font-weight: bold;
    color: #333;
}

.history tr.total td.left {
    letter-spacing: 0.300px;
}

.dot {
    display: inline-block;
    width: 7px;
    height: 7px;
    margin: 0 9px 0 4px;
    border-radius: 50%;
    border: 1px solid #999;
    background-color: #ddd;
}

/* Terminal tabs */
.term-tabs {
    display: flex;
    align-items: flex-start;
    flex: 0 0 23px;
    padding-left: 2px;
    border-top: 1px solid #111;
    border-bottom: 1px solid #bbb;
}

.ttab {
    margin-top: 3px;
    padding: 0 9.700px 0 9px;
    border-right: 1px solid #999;
    line-height: 13px;
    font-size: 12px;
    color: #777;
}

.ttab.active {
    height: 20px;
    margin: -1px 0 0 -1px;
    padding: 0 10px 0 9px;
    background-color: #fff;
    border: 1px solid #111;
    border-width: 0 1px 1px 1px;
    line-height: 19px;
    color: #111;
}

.ttab sup {
    margin-left: 2px;
    vertical-align: -1px;
    font-size: 9px;
    font-weight: bold;
    color: #d03030;
}

/* Status bar */
.statusbar {
    position: relative;
    display: flex;
    align-items: center;
    flex: 0 0 22px;
    padding-top: 2px;
}

.st {
    height: 18px;
    line-height: 18px;
    border-right: 1px solid #aaa;
    font-size: 11px;
}

.st.help {
    width: 628px;
    padding-left: 2px;
    color: #222;
}

.st.profile {
    width: 134px;
    padding-left: 5px;
    color: #444;
}

.st.w117 { width: 117px; }
.st.w82 { width: 82px; }
.st.w78 { width: 78px; }
.st.w79 { width: 79px; }

.st.conn {
    display: flex;
    align-items: center;
    flex: 1;
    padding-left: 6px;
    border-right: 0;
}

.conn-bars {
    width: 22px;
    height: 14px;
    margin-right: 38px;
}

.conn-text {
    position: relative;
    z-index: 2;
    color: #222;
}

.watermark {
    position: absolute;
    left: 1288px;
    top: -26px;
    width: 148px;
    color: rgba(110, 145, 195, 0.6);
}

.watermark b {
    display: block;
    height: 30px;
    line-height: 30px;
    font-size: 29px;
    font-style: italic;
}

.watermark i {
    display: block;
    line-height: 18px;
    font-size: 20px;
}

/* Bit of the next window showing at the bottom */
.taskstrip {
    display: flex;
    flex: 1;
    gap: 2px;
    padding-left: 2px;
}

.task {
    width: 36px;
    border: 1px solid #d4d4d4;
    border-bottom: 0;
}

.task.on {
    width: 30px;
    border: 2px solid #555;
    border-bottom: 0;
}
```

FILE: chart.js

```js
// high, low, body top, body bottom, hollow
const candles = [
    [107,143,107,143,0],[134,159,140,155,0],[154,165,154,164,0],[160,172,163,167,0],[158,167,161,167,1],
    [154,167,156,162,1],[153,183,156,180,0],[175,189,179,187,0],[187,192,187,188,0],[188,191,189,190,0],
    [184,190,184,190,1],[181,185,181,185,1],[177,185,180,185,0],[179,190,179,185,1],[173,183,176,179,1],
    [175,179,177,177,0],[174,179,176,178,0],[173,179,174,178,1],[172,181,175,179,0],[171,181,177,179,1],
    [177,183,177,181,0],[177,182,178,180,1],[178,185,178,183,0],[180,185,182,182,0],[172,183,178,181,1],
    [167,179,173,177,1],[165,182,173,181,0],[182,218,182,210,0],[208,217,209,213,0],[208,212,208,212,1],
    [200,213,201,209,1],[198,210,200,201,0],[196,204,198,202,1],[192,203,194,200,1],[192,198,195,197,0],
    [194,200,196,198,0],[185,198,188,197,1],[176,189,178,188,1],[171,190,179,187,0],[186,195,186,190,0],
    [180,186,181,181,0],[180,185,181,181,0],[177,190,182,187,0],[177,190,177,189,1],[177,186,177,186,0],
    [183,189,185,186,0],[185,189,186,187,0],[185,189,186,189,0],[183,195,186,195,0],[194,202,195,201,0],
    [198,207,200,200,0],[198,206,200,200,0],[199,205,200,204,0],[202,207,202,204,1],[202,213,202,212,0],
    [206,217,212,216,0],[215,231,215,230,0],[226,233,227,231,1],[224,228,225,226,0],[224,227,225,225,0],
    [219,235,223,226,0],[218,231,223,227,1],[220,229,222,227,0],[221,227,221,227,1],[220,223,221,222,0],
    [220,223,221,222,0],[219,227,221,227,0],[222,269,226,262,0],[256,269,259,261,1],[257,265,258,260,0],
    [257,267,257,263,1],[252,258,253,257,1],[248,258,251,254,1],[247,261,251,260,0],[248,264,255,260,1],
    [253,260,255,255,0],[254,258,255,257,0],[253,261,258,258,0],[253,262,257,261,0],[258,273,259,272,0],
    [268,277,269,272,1],[262,272,263,269,1],[257,265,257,263,1],[253,258,254,258,1],[254,262,254,257,0],
    [257,269,258,262,0],[255,269,261,263,0],[257,263,258,263,1],[248,259,252,258,1],[250,256,251,256,0],
    [255,272,256,268,0],[262,268,263,268,1],[242,264,249,263,1],[235,252,240,250,1],[239,247,240,247,0],
    [243,248,246,247,0],[247,257,247,255,0]
];

const SVG_NS = 'http://www.w3.org/2000/svg';
const group = document.getElementById('candles');

function addCandle(x, high, low, top, bottom, hollow) {
    const wick = document.createElementNS(SVG_NS, 'line');
    wick.setAttribute('x1', x + 0.5);
    wick.setAttribute('x2', x + 0.5);
    wick.setAttribute('y1', high);
    wick.setAttribute('y2', low);
    wick.setAttribute('stroke', '#000');
    group.appendChild(wick);

    // Flat bodies are just a tick across the wick
    const body = document.createElementNS(SVG_NS, 'rect');
    body.setAttribute('x', x - 1.5);
    body.setAttribute('y', top + 0.5);
    body.setAttribute('width', 4);
    body.setAttribute('height', Math.max(bottom - top, 1));
    body.setAttribute('fill', hollow ? '#fff' : '#000');
    body.setAttribute('stroke', '#000');
    group.appendChild(body);
}

candles.forEach((c, i) => addCandle(504 + i * 8, c[0], c[1], c[2], c[3], c[4]));

// The few bars at the left edge that stick out above the trade panel
[[281,84,92],[288,88,92],[305,89,92],[320,89,92],[327,88,92]].forEach(b => addCandle(b[0], b[1], b[2], b[1] + 1, b[2], 0));
```
